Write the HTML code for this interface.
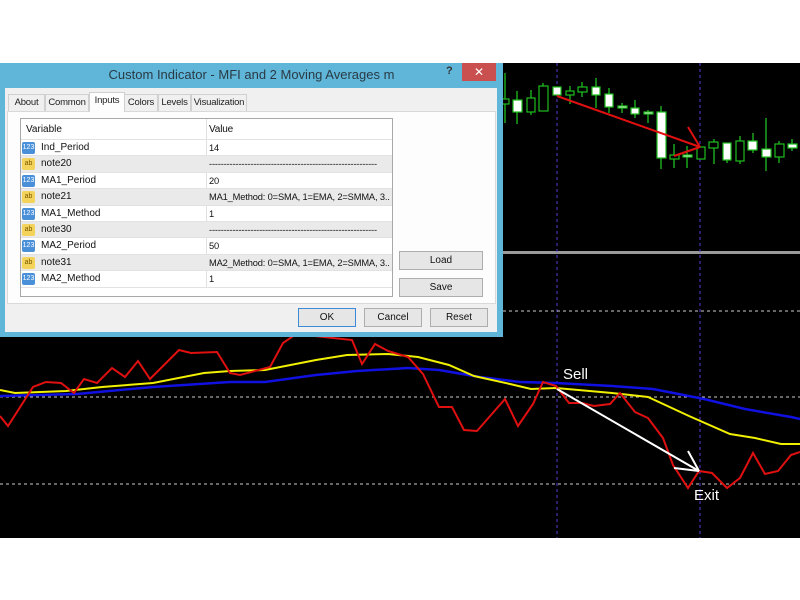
<!DOCTYPE html>
<html><head><meta charset="utf-8"><style>
*{margin:0;padding:0;box-sizing:border-box}
body{width:800px;height:600px;background:#fff;position:relative;overflow:hidden;font-family:"Liberation Sans",sans-serif}
svg.c{position:absolute;left:0;top:0}
.dlg{position:absolute;left:0;top:63px;width:503px;height:274px;background:#5fb6d9}
.title{position:absolute;left:0;top:0;width:503px;height:24px;text-align:center;font-size:13px;line-height:24px;color:#2a3a44}
.q{position:absolute;left:446px;top:2px;font-size:11px;font-weight:bold;color:#333}
.x{position:absolute;left:462px;top:0;width:34px;height:18px;background:#c9504e;color:#fff;text-align:center;font-size:12px;line-height:18px}
.body{position:absolute;left:5px;top:25px;width:492px;height:244px;background:#f0f0f0}
.tab{position:absolute;top:6px;height:18px;border:1px solid #d0d0d0;border-bottom:none;background:#f0f0f0;font-size:9.5px;line-height:16px;text-align:center;color:#222;overflow:hidden;white-space:nowrap;letter-spacing:-0.2px}
.panel{position:absolute;left:2px;top:23px;width:489px;height:193px;background:#fdfdfd;border:1px solid #d9d9d9}
.tbl{position:absolute;left:12px;top:6px;width:373px;height:179px;border:1px solid #a8a8a8;background:#fff;overflow:hidden}
.row{position:absolute;left:0;width:371px;height:16.4px;font-size:10px;line-height:16px;color:#111;border-bottom:1px solid #e2e2e2}
.row.g{background:#eaeaea}
.row span.a{position:absolute;left:20px}
.row span.b{position:absolute;left:188px;width:180px;overflow:hidden;white-space:nowrap;font-size:9.3px;letter-spacing:-0.15px}
.row i{position:absolute;left:1px;top:2px;width:13px;height:12px;font-style:normal;font-size:7px;line-height:12px;text-align:center;border-radius:2px}
i.n{background:#4a90d9;color:#fff}
i.t{background:#f3d35a;color:#7a5a00}
.vd{position:absolute;left:185px;top:0;width:1px;height:168px;background:#e0e0e0}
.btn{position:absolute;height:19px;border:1px solid #adadad;background:#e6e6e6;font-size:10px;text-align:center;line-height:17px;color:#111}
</style></head><body>
<svg class="c" width="800" height="600" viewBox="0 0 800 600">
<rect x="0" y="63" width="800" height="475" fill="#000"/>
<rect x="503" y="251" width="297" height="3" fill="#9a9a9a"/>
<g stroke="#5a3ad8" stroke-width="1" stroke-dasharray="3,3"><line x1="557" y1="63" x2="557" y2="538"/><line x1="700" y1="63" x2="700" y2="538"/></g>
<g stroke="#ccc" stroke-width="1" stroke-dasharray="3,3"><line x1="503" y1="311" x2="800" y2="311"/><line x1="0" y1="397" x2="800" y2="397"/><line x1="0" y1="484" x2="800" y2="484"/></g>
<g stroke="#1fbf1f" stroke-width="1.3">
<line x1="505" y1="73" x2="505" y2="123"/><line x1="517" y1="91" x2="517" y2="124"/><line x1="531" y1="90" x2="531" y2="115"/><line x1="543" y1="83" x2="543" y2="111"/><line x1="570" y1="86" x2="570" y2="104"/><line x1="582" y1="82" x2="582" y2="97"/><line x1="596" y1="78" x2="596" y2="108"/><line x1="609" y1="88" x2="609" y2="113"/><line x1="622" y1="103" x2="622" y2="113"/><line x1="635" y1="100" x2="635" y2="118"/><line x1="648" y1="110" x2="648" y2="123"/><line x1="661" y1="106" x2="661" y2="169"/><line x1="674" y1="144" x2="674" y2="168"/><line x1="687" y1="146" x2="687" y2="168"/><line x1="714" y1="139" x2="714" y2="164"/><line x1="727" y1="143" x2="727" y2="163"/><line x1="740" y1="136" x2="740" y2="164"/><line x1="753" y1="133" x2="753" y2="153"/><line x1="766" y1="118" x2="766" y2="171"/><line x1="779" y1="141" x2="779" y2="163"/><line x1="792" y1="139" x2="792" y2="151"/>
</g>
<g stroke="#1fbf1f" stroke-width="1.2">
<rect x="502" y="99" width="7" height="5" fill="#000"/><rect x="513" y="100" width="9" height="12" fill="#fff"/><rect x="527" y="98" width="8" height="14" fill="#000"/><rect x="539" y="86" width="9" height="25" fill="#000"/><rect x="553" y="87" width="8" height="8" fill="#fff"/><rect x="566" y="91" width="8" height="4" fill="#000"/><rect x="578" y="87" width="9" height="5" fill="#000"/><rect x="592" y="87" width="8" height="8" fill="#fff"/><rect x="605" y="94" width="8" height="13" fill="#fff"/><rect x="618" y="106" width="9" height="2" fill="#fff"/><rect x="631" y="108" width="8" height="6" fill="#fff"/><rect x="644" y="112" width="9" height="2" fill="#fff"/><rect x="657" y="112" width="9" height="46" fill="#fff"/><rect x="670" y="155" width="9" height="4" fill="#000"/><rect x="683" y="155" width="9" height="2" fill="#fff"/><rect x="697" y="147" width="8" height="12" fill="#000"/><rect x="709" y="142" width="9" height="6" fill="#000"/><rect x="723" y="143" width="8" height="17" fill="#fff"/><rect x="736" y="141" width="8" height="20" fill="#000"/><rect x="748" y="141" width="9" height="9" fill="#fff"/><rect x="762" y="149" width="9" height="8" fill="#fff"/><rect x="775" y="144" width="9" height="13" fill="#000"/><rect x="788" y="144" width="9" height="4" fill="#fff"/>
</g>
<g stroke="#e01010" stroke-width="2" fill="none"><line x1="557" y1="96" x2="700" y2="147"/><line x1="688" y1="127" x2="700" y2="147"/><line x1="674" y1="156" x2="700" y2="147"/></g>
<polyline fill="none" stroke="#1010e0" stroke-width="2.5" points="0,396 77,394 153,387 230,382 265,382 316,375 357,371 408,368 439,370 480,377 520,382 556,383 612,386 653,389 704,399 745,409 791,417 800,419"/>
<polyline fill="none" stroke="#f0f000" stroke-width="2" points="0,390 15,393 66,391 102,387 153,383 204,373 230,371 265,370 316,360 347,355 388,354 418,357 449,365 474,376 510,384 531,389 556,388 612,393 648,397 689,416 730,434 755,438 781,444 800,444"/>
<polyline fill="none" stroke="#e01010" stroke-width="2" points="0,416 8,426 33,387 46,382 61,383 74,393 84,379 97,383 112,368 125,377 138,361 150,379 179,350 191,353 217,352 230,373 240,375 270,367 283,343 296,334 352,340 362,364 375,344 388,351 408,357 423,374 439,407 452,407 464,430 477,431 505,399 518,426 533,404 543,382 556,386 569,403 582,403 594,406 610,404 620,393 635,412 648,418 663,438 673,465 688,488 699,471 712,473 727,488 740,478 753,453 765,474 778,471 791,455 800,452"/>
<g stroke="#fff" stroke-width="2" fill="none"><line x1="557" y1="389" x2="699" y2="471"/><line x1="688" y1="451" x2="699" y2="471"/><line x1="674" y1="468" x2="699" y2="471"/></g>
<text x="563" y="379" fill="#fff" font-family="Liberation Sans" font-size="15">Sell</text>
<text x="694" y="500" fill="#fff" font-family="Liberation Sans" font-size="15">Exit</text>
</svg>
<div class="dlg">
<div class="title">Custom Indicator - MFI and 2 Moving Averages m</div>
<div class="q">?</div><div class="x">✕</div>
<div class="body">
<div class="tab" style="left:3px;width:37px">About</div>
<div class="tab" style="left:40px;width:44px">Common</div>
<div class="tab" style="left:84px;width:36px;top:4px;height:20px;background:#fdfdfd;z-index:2">Inputs</div>
<div class="tab" style="left:119px;width:34px">Colors</div>
<div class="tab" style="left:153px;width:33px">Levels</div>
<div class="tab" style="left:186px;width:56px">Visualization</div>
<div class="panel">
<div class="tbl">
<div class="vd"></div>
<div class="row" style="top:0;height:21px;line-height:21px"><span class="a" style="left:5px">Variable</span><span class="b" style="font-size:10px">Value</span></div>
<div class="row" style="top:21px"><i class="n">123</i><span class="a">Ind_Period</span><span class="b">14</span></div>
<div class="row g" style="top:37.4px"><i class="t">ab</i><span class="a">note20</span><span class="b" style="width:168px">------------------------------------------------------------------</span></div>
<div class="row" style="top:53.8px"><i class="n">123</i><span class="a">MA1_Period</span><span class="b">20</span></div>
<div class="row g" style="top:70.2px"><i class="t">ab</i><span class="a">note21</span><span class="b">MA1_Method: 0=SMA, 1=EMA, 2=SMMA, 3...</span></div>
<div class="row" style="top:86.6px"><i class="n">123</i><span class="a">MA1_Method</span><span class="b">1</span></div>
<div class="row g" style="top:103px"><i class="t">ab</i><span class="a">note30</span><span class="b" style="width:168px">------------------------------------------------------------------</span></div>
<div class="row" style="top:119.4px"><i class="n">123</i><span class="a">MA2_Period</span><span class="b">50</span></div>
<div class="row g" style="top:135.8px"><i class="t">ab</i><span class="a">note31</span><span class="b">MA2_Method: 0=SMA, 1=EMA, 2=SMMA, 3...</span></div>
<div class="row" style="top:152.2px"><i class="n">123</i><span class="a">MA2_Method</span><span class="b">1</span></div>
</div>
<div class="btn" style="left:391px;top:139px;width:84px">Load</div>
<div class="btn" style="left:391px;top:166px;width:84px">Save</div>
</div>
<div class="btn" style="left:293px;top:220px;width:58px;border-color:#3c8ad6">OK</div>
<div class="btn" style="left:359px;top:220px;width:58px">Cancel</div>
<div class="btn" style="left:425px;top:220px;width:58px">Reset</div>
</div>
</div>
</body></html>
